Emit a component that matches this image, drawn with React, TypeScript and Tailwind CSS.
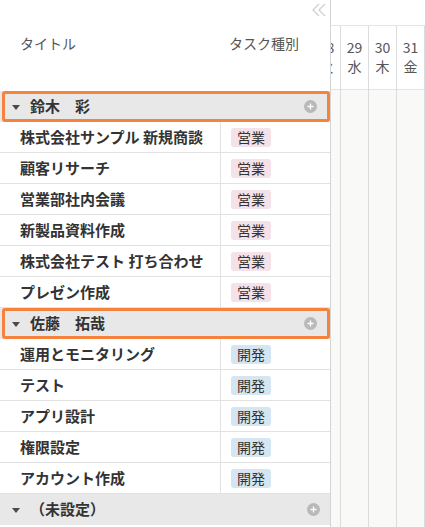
import { Fragment } from 'react';

type Task = { title: string; kind: '営業' | '開発' };

const groups: { name: string; highlight: boolean; tasks: Task[] }[] = [
  {
    name: '鈴木　彩',
    highlight: true,
    tasks: [
      { title: '株式会社サンプル 新規商談', kind: '営業' },
      { title: '顧客リサーチ', kind: '営業' },
      { title: '営業部社内会議', kind: '営業' },
      { title: '新製品資料作成', kind: '営業' },
      { title: '株式会社テスト 打ち合わせ', kind: '営業' },
      { title: 'プレゼン作成', kind: '営業' },
    ],
  },
  {
    name: '佐藤　拓哉',
    highlight: true,
    tasks: [
      { title: '運用とモニタリング', kind: '開発' },
      { title: 'テスト', kind: '開発' },
      { title: 'アプリ設計', kind: '開発' },
      { title: '権限設定', kind: '開発' },
      { title: 'アカウント作成', kind: '開発' },
    ],
  },
  { name: '（未設定）', highlight: false, tasks: [] },
];

const days = [
  { d: '28', w: '火' },
  { d: '29', w: '水' },
  { d: '30', w: '木' },
  { d: '31', w: '金' },
];

function PlusCircle() {
  return (
    <svg width="13" height="13" viewBox="0 0 13 13">
      <circle cx="6.5" cy="6.5" r="6.5" fill="#b9b9b9" />
      <path d="M6.5 3.5v6M3.5 6.5h6" stroke="#fff" strokeWidth="1.3" />
    </svg>
  );
}

function GroupRow({ name, highlight }: { name: string; highlight: boolean }) {
  return (
    <div className="h-[31px] bg-[#e8e8e8]">
      <div
        className={`h-full flex items-center pr-[10px] ${
          highlight ? 'ml-[2px] border-[3px] border-[#f5833e] rounded-[3px] pl-[7px]' : 'pl-[12px]'
        }`}
      >
        <svg width="8" height="5" viewBox="0 0 8 5" className="mt-[2px]">
          <path d="M0 0h8L4 5z" fill="#4a4a4a" />
        </svg>
        <span className="ml-[10px] font-bold text-[15px] text-[#333]">{name}</span>
        <span className="ml-auto">
          <PlusCircle />
        </span>
      </div>
    </div>
  );
}

export default function App() {
  return (
    <div
      className="w-[425px] h-[527px] overflow-hidden flex bg-white"
      style={{ fontFamily: '"Noto Sans CJK JP", "Noto Sans", sans-serif' }}
    >
      <div className="w-[331px] shrink-0 border-r border-[#d4d4d4] flex flex-col relative">
        <svg width="14" height="14" viewBox="0 0 14 14" className="absolute left-[312px] top-[3px]">
          <path d="M7 1L1 7l6 6M13 1L7 7l6 6" stroke="#cfcfcf" strokeWidth="1.3" fill="none" />
        </svg>
        <div className="h-[91px] flex pt-[33px] text-[14px] text-[#555]">
          <div className="w-[220px] pl-[20px]">タイトル</div>
          <div className="pl-[9px]">タスク種別</div>
        </div>
        {groups.map(g => (
          <Fragment key={g.name}>
            <GroupRow name={g.name} highlight={g.highlight} />
            {g.tasks.map(t => (
              <div key={t.title} className="h-[31px] flex border-b border-[#e2e2e2]">
                <div className="w-[221px] border-r border-[#e2e2e2] pl-[20px] flex items-center font-bold text-[15px] text-[#333]">
                  {t.title}
                </div>
                <div className="pl-[10px] flex items-center">
                  <span
                    className={`w-[40px] h-[19px] rounded-[3px] flex items-center justify-center text-[14px] text-[#333] ${
                      t.kind === '営業' ? 'bg-[#f5e1e8]' : 'bg-[#d5e6f2]'
                    }`}
                  >
                    {t.kind}
                  </span>
                </div>
              </div>
            ))}
          </Fragment>
        ))}
      </div>
      <div className="flex-1 overflow-hidden flex flex-col">
        <div className="h-[26px] shrink-0 border-b border-[#e4e4e4]" />
        <div className="flex-1 flex -ml-[18px] bg-[#f9f9f7]">
          {days.map(day => (
            <div key={day.d} className="w-[28px] shrink-0 border-r border-[#dcdcdc] flex flex-col">
              <div className="h-[64px] bg-white border-b border-[#e4e4e4] flex flex-col items-center pt-[12px] gap-[1px] text-[14px] leading-[18px] text-[#555]">
                <span>{day.d}</span>
                <span>{day.w}</span>
              </div>
            </div>
          ))}
        </div>
      </div>
    </div>
  );
}
